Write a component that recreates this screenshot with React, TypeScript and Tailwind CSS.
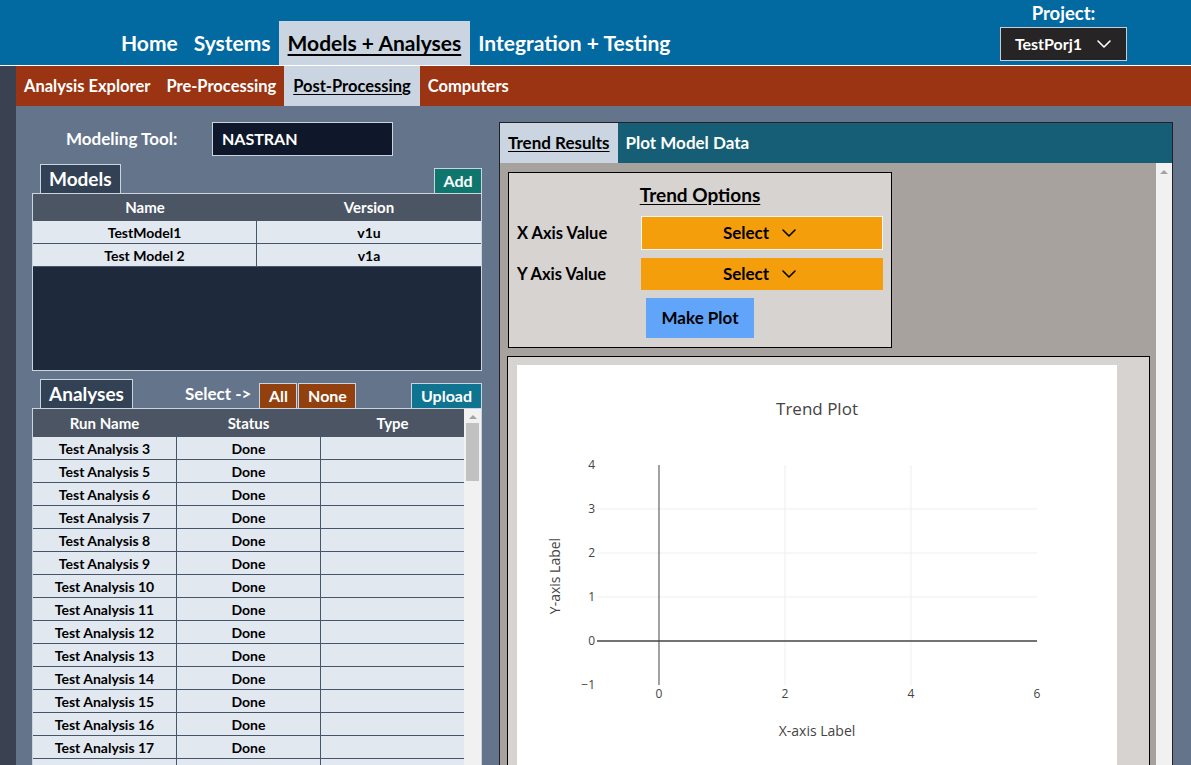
import { ChevronDown } from "lucide-react";

const models = [
    { name: "TestModel1", version: "v1u" },
    { name: "Test Model 2", version: "v1a" },
];

const analyses = [3, 5, 6, 7, 8, 9, 10, 11, 12, 13, 14, 15, 16, 17];

function TrendPlot() {
    // plot area: x -1..6 over 80..520, y -1..4 over 320..100
    const px = (v: number) => 80 + ((v + 0.984) / 6.984) * 440;
    const py = (v: number) => 320 - ((v + 1) / 5) * 220;
    const font = "'Open Sans', verdana, arial, sans-serif";
    return (
        <svg width="600" height="400" viewBox="0 0 600 400" className="block">
            <rect width="600" height="400" fill="#fff" />
            {[1, 2, 3].map((v) => (
                <line key={v} x1={80} x2={520} y1={py(v)} y2={py(v)} stroke="#eee" strokeWidth="1" />
            ))}
            {[2, 4].map((v) => (
                <line key={v} x1={px(v)} x2={px(v)} y1={100} y2={320} stroke="#eee" strokeWidth="1" />
            ))}
            <line x1={80} x2={520} y1={py(0)} y2={py(0)} stroke="#444" strokeWidth="1.5" />
            <line x1={px(0)} x2={px(0)} y1={100} y2={320} stroke="#444" strokeWidth="1" />
            <text x="300" y="50" textAnchor="middle" fontFamily={font} fontSize="17" fill="#444">Trend Plot</text>
            {[4, 3, 2, 1, 0, -1].map((v) => (
                <text key={v} x="78" y={py(v) + 4} textAnchor="end" fontFamily={font} fontSize="12" fill="#444">
                    {v < 0 ? "\u2212" + Math.abs(v) : v}
                </text>
            ))}
            {[0, 2, 4, 6].map((v) => (
                <text key={v} x={px(v)} y="333" textAnchor="middle" fontFamily={font} fontSize="12" fill="#444">{v}</text>
            ))}
            <text x="300" y="371" textAnchor="middle" fontFamily={font} fontSize="14" fill="#444">X-axis Label</text>
            <text x="0" y="0" transform="translate(43 211) rotate(-90)" textAnchor="middle" fontFamily={font} fontSize="14" fill="#444">Y-axis Label</text>
        </svg>
    );
}

export default function App() {
    return (
        <div className="w-[1191px] h-[765px] overflow-hidden flex flex-col bg-[#64748b] font-['Lato',sans-serif]">
            {/* top nav */}
            <header className="h-[66px] shrink-0 bg-[#0369a1] border-b border-white flex items-end">
                <nav className="flex items-end ml-[113px]">
                    <a className="h-[44px] px-2 flex items-center text-[21px] font-bold text-white">Home</a>
                    <a className="h-[44px] px-2 flex items-center text-[21px] font-bold text-white">Systems</a>
                    <a className="h-[44px] px-[9px] flex items-center text-[21px] font-bold text-black underline underline-offset-[3px] bg-[#cbd5e1]">Models + Analyses</a>
                    <a className="h-[44px] px-2 flex items-center text-[21px] font-bold text-white">Integration + Testing</a>
                </nav>
                <div className="ml-auto mr-[64px] self-start flex flex-col items-center pt-[2px]">
                    <span className="text-[18.5px] font-bold text-white leading-[23px]">Project:</span>
                    <button className="mt-[2px] w-[127px] h-[34px] bg-[#262424] border border-[#c8cdd4] flex items-center justify-center gap-[10px] text-white text-[16px] font-bold">
                        TestPorj1
                        <ChevronDown className="w-6 h-6 -mr-1" strokeWidth={1.6} />
                    </button>
                </div>
            </header>

            <div className="flex flex-1 min-h-0">
                <div className="w-[16px] shrink-0 bg-[#3a4150]" />
                <div className="flex-1 flex flex-col min-h-0">
                    {/* sub nav */}
                    <nav className="h-[40px] shrink-0 bg-[#9a3412] flex items-stretch">
                        <a className="px-2 flex items-center text-[16.5px] font-bold text-white">Analysis Explorer</a>
                        <a className="px-2 flex items-center text-[16.5px] font-bold text-white">Pre-Processing</a>
                        <a className="px-[9px] flex items-center text-[16.5px] font-bold text-black underline underline-offset-2 bg-[#cbd5e1]">Post-Processing</a>
                        <a className="px-2 flex items-center text-[16.5px] font-bold text-white">Computers</a>
                    </nav>

                    <div className="flex-1 min-h-0 flex pt-4 pl-4 gap-[17px]">
                        {/* left column */}
                        <div className="w-[450px] shrink-0 flex flex-col">
                            <div className="flex items-center h-[34px]">
                                <span className="ml-[34px] w-[146px] text-[17px] font-bold text-white">Modeling Tool:</span>
                                <div className="w-[181px] h-[34px] bg-[#0f172a] border border-[#cbd5e1] flex items-center pl-[9px] text-[16px] font-bold text-white">NASTRAN</div>
                            </div>

                            <div className="mt-[8px] flex items-end justify-between">
                                <div className="ml-2 h-[29px] px-2 bg-[#334155] border border-b-0 border-[#cbd5e1] flex items-center text-[19px] font-bold text-white">Models</div>
                                <button className="h-[25px] w-[48px] bg-[#0f766e] border border-b-0 border-[#cbd5e1] text-[16px] font-bold text-white">Add</button>
                            </div>
                            <div className="h-[178px] border border-[#cbd5e1] bg-[#1e293b] flex flex-col">
                                <div className="grid grid-cols-[224px_1fr] h-[27px] bg-[#4b5563] text-white text-[15px] font-bold">
                                    <span className="flex items-center justify-center">Name</span>
                                    <span className="flex items-center justify-center">Version</span>
                                </div>
                                {models.map((m) => (
                                    <div key={m.name} className="grid grid-cols-[224px_1fr] h-[23px] bg-[#e2e8f0] border-b border-[#475569] text-[14px] font-bold text-black">
                                        <span className="flex items-center justify-center border-r border-[#475569]">{m.name}</span>
                                        <span className="flex items-center justify-center">{m.version}</span>
                                    </div>
                                ))}
                            </div>

                            <div className="mt-[8px] flex items-end">
                                <div className="ml-2 h-[29px] px-2 bg-[#334155] border border-b-0 border-[#cbd5e1] flex items-center text-[19px] font-bold text-white">Analyses</div>
                                <span className="ml-[52px] mb-[2px] text-[17px] font-bold text-white">Select -&gt;</span>
                                <button className="ml-[8px] h-[25px] w-[38px] bg-[#92400e] border border-b-0 border-[#cbd5e1] text-[16px] font-bold text-white">All</button>
                                <button className="ml-px h-[25px] w-[58px] bg-[#92400e] border border-b-0 border-[#cbd5e1] text-[16px] font-bold text-white">None</button>
                                <button className="ml-auto h-[25px] w-[71px] bg-[#0e7490] border border-b-0 border-[#cbd5e1] text-[16px] font-bold text-white">Upload</button>
                            </div>
                            <div className="flex-1 min-h-0 border border-b-0 border-[#cbd5e1] flex overflow-hidden">
                                <div className="flex-1 flex flex-col">
                                    <div className="grid grid-cols-[144px_144px_1fr] h-[28px] shrink-0 bg-[#4b5563] text-white text-[15px] font-bold">
                                        <span className="flex items-center justify-center border-r border-[#475569]">Run Name</span>
                                        <span className="flex items-center justify-center border-r border-[#475569]">Status</span>
                                        <span className="flex items-center justify-center">Type</span>
                                    </div>
                                    {analyses.map((n) => (
                                        <div key={n} className="grid grid-cols-[144px_144px_1fr] h-[23px] shrink-0 bg-[#e2e8f0] border-b border-[#475569] text-[14px] font-bold text-black">
                                            <span className="flex items-center justify-center border-r border-[#475569]">Test Analysis {n}</span>
                                            <span className="flex items-center justify-center border-r border-[#475569]">Done</span>
                                            <span />
                                        </div>
                                    ))}
                                    <div className="grid grid-cols-[144px_144px_1fr] h-[23px] shrink-0 bg-[#e2e8f0]">
                                        <span className="border-r border-[#475569]" />
                                        <span className="border-r border-[#475569]" />
                                        <span />
                                    </div>
                                </div>
                                <div className="w-[17px] shrink-0 bg-[#f1f1f1] flex flex-col items-center">
                                    <div className="mt-[6px] w-0 h-0 border-l-[4px] border-r-[4px] border-b-[4px] border-l-transparent border-r-transparent border-b-[#a3a3a3]" />
                                    <div className="mt-[4px] w-[13px] h-[58px] bg-[#c1c1c1]" />
                                </div>
                            </div>
                        </div>

                        {/* right column */}
                        <div className="w-[674px] shrink-0 border border-b-0 border-[#1f2328] flex flex-col min-h-0">
                            <div className="h-[40px] shrink-0 bg-[#155e75] flex items-stretch">
                                <a className="px-2 flex items-center bg-[#cbd5e1] text-[17px] font-bold text-black underline underline-offset-2">Trend Results</a>
                                <a className="px-2 flex items-center text-[17px] font-bold text-white">Plot Model Data</a>
                            </div>
                            <div className="flex-1 min-h-0 flex bg-[#a8a29e]">
                                <div className="flex-1 overflow-hidden pl-2 pt-[9px] flex flex-col items-start">
                                    <div className="w-[384px] h-[176px] bg-[#d6d3d1] border border-black flex flex-col">
                                        <h2 className="mt-[10px] text-center text-[19px] font-bold text-black underline underline-offset-2 leading-[24px]">Trend Options</h2>
                                        <div className="mt-[9px] flex items-center">
                                            <span className="ml-2 w-[124px] text-[16.5px] font-bold text-black">X Axis Value</span>
                                            <button className="w-[242px] h-[34px] bg-[#f59e0b] border border-[#f5f5f4] flex items-center justify-center gap-2 text-[17px] font-bold text-black">
                                                Select
                                                <ChevronDown className="w-6 h-6" strokeWidth={1.6} />
                                            </button>
                                        </div>
                                        <div className="mt-[8px] flex items-center">
                                            <span className="ml-2 w-[124px] text-[16.5px] font-bold text-black">Y Axis Value</span>
                                            <button className="w-[242px] h-[32px] bg-[#f59e0b] flex items-center justify-center gap-2 text-[17px] font-bold text-black">
                                                Select
                                                <ChevronDown className="w-6 h-6" strokeWidth={1.6} />
                                            </button>
                                        </div>
                                        <button className="mt-[8px] ml-[137px] w-[108px] h-[40px] bg-[#60a5fa] text-[17px] font-bold text-black">Make Plot</button>
                                    </div>
                                    <div className="mt-[8px] -ml-px w-[643px] flex-1 bg-[#d6d3d1] border border-b-0 border-black pl-[9px] pt-[8px]">
                                        <TrendPlot />
                                    </div>
                                </div>
                                <div className="w-[16px] shrink-0 bg-[#f1f1f1] flex flex-col items-center">
                                    <div className="mt-[7px] w-0 h-0 border-l-[4px] border-r-[4px] border-b-[4px] border-l-transparent border-r-transparent border-b-[#a3a3a3]" />
                                </div>
                            </div>
                        </div>
                    </div>
                </div>
            </div>
        </div>
    );
}
